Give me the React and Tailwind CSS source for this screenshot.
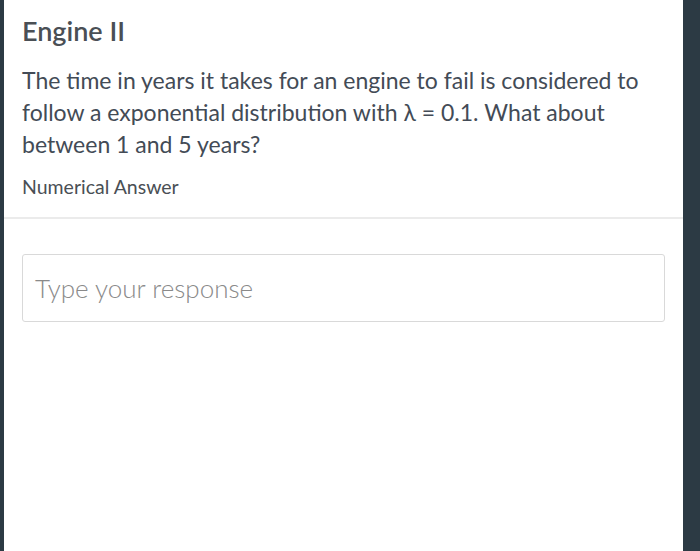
export default function App() {
  return (
    <div className="flex h-[551px] w-[700px] bg-[#2c3a44]" style={{ fontFamily: 'Lato, "Noto Sans", sans-serif' }}>
      <div className="ml-[4px] mr-[17px] flex flex-1 flex-col bg-white">
        <div className="px-[18px] pt-[14px]">
          <h1 className="text-[27px] font-semibold leading-[34px] text-[#4a4f55]">Engine II</h1>
          <p className="mt-[16px] text-[23px] leading-[32px] text-[#434b56]">
            The time in years it takes for an engine to fail is considered to follow a exponential distribution with λ = 0.1. What about between 1 and 5 years?
          </p>
          <p className="mt-[14px] text-[19.5px] leading-[26px] text-[#4a4f55]">Numerical Answer</p>
        </div>
        <div className="mt-[17px] h-[2px] bg-[#ebebeb]" />
        <div className="px-[18px] pt-[35px]">
          <div className="flex h-[68px] items-center rounded-[3px] border border-[#d9d9d9] px-[12px]">
            <span className="text-[26px] font-light text-[#8a8a8a]">Type your response</span>
          </div>
        </div>
      </div>
    </div>
  );
}
